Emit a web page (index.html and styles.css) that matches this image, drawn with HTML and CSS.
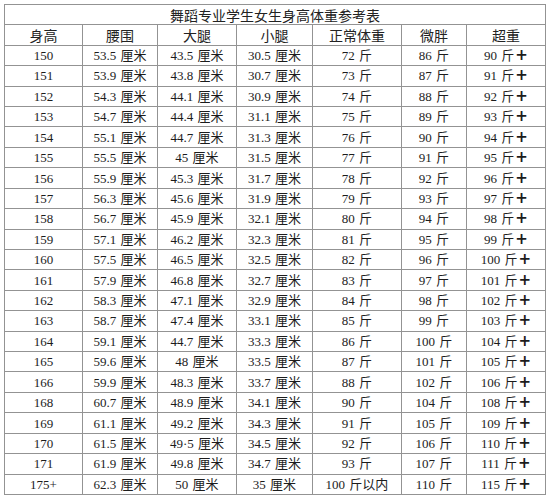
FILE: index.html
```html
<!DOCTYPE html>
<html lang="zh-CN">
<head>
<meta charset="utf-8">
<title>舞蹈专业学生女生身高体重参考表</title>
<link rel="stylesheet" href="styles.css">
</head>
<body>
<div class="sheet">
  <div class="cell title">舞蹈专业学生女生身高体重参考表</div>
  <div class="cell head">身高</div><div class="cell head">腰围</div><div class="cell head">大腿</div><div class="cell head">小腿</div><div class="cell head">正常体重</div><div class="cell head">微胖</div><div class="cell head">超重</div>

  <div class="cell">150</div><div class="cell">53.5 厘米</div><div class="cell">43.5 厘米</div><div class="cell">30.5 厘米</div><div class="cell">72 斤</div><div class="cell">86 斤</div><div class="cell">90 斤<span class="plus">+</span></div>
  <div class="cell">151</div><div class="cell">53.9 厘米</div><div class="cell">43.8 厘米</div><div class="cell">30.7 厘米</div><div class="cell">73 斤</div><div class="cell">87 斤</div><div class="cell">91 斤<span class="plus">+</span></div>
  <div class="cell">152</div><div class="cell">54.3 厘米</div><div class="cell">44.1 厘米</div><div class="cell">30.9 厘米</div><div class="cell">74 斤</div><div class="cell">88 斤</div><div class="cell">92 斤<span class="plus">+</span></div>
  <div class="cell">153</div><div class="cell">54.7 厘米</div><div class="cell">44.4 厘米</div><div class="cell">31.1 厘米</div><div class="cell">75 斤</div><div class="cell">89 斤</div><div class="cell">93 斤<span class="plus">+</span></div>
  <div class="cell">154</div><div class="cell">55.1 厘米</div><div class="cell">44.7 厘米</div><div class="cell">31.3 厘米</div><div class="cell">76 斤</div><div class="cell">90 斤</div><div class="cell">94 斤<span class="plus">+</span></div>
  <div class="cell">155</div><div class="cell">55.5 厘米</div><div class="cell">45 厘米</div><div class="cell">31.5 厘米</div><div class="cell">77 斤</div><div class="cell">91 斤</div><div class="cell">95 斤<span class="plus">+</span></div>
  <div class="cell">156</div><div class="cell">55.9 厘米</div><div class="cell">45.3 厘米</div><div class="cell">31.7 厘米</div><div class="cell">78 斤</div><div class="cell">92 斤</div><div class="cell">96 斤<span class="plus">+</span></div>
  <div class="cell">157</div><div class="cell">56.3 厘米</div><div class="cell">45.6 厘米</div><div class="cell">31.9 厘米</div><div class="cell">79 斤</div><div class="cell">93 斤</div><div class="cell">97 斤<span class="plus">+</span></div>
  <div class="cell">158</div><div class="cell">56.7 厘米</div><div class="cell">45.9 厘米</div><div class="cell">32.1 厘米</div><div class="cell">80 斤</div><div class="cell">94 斤</div><div class="cell">98 斤<span class="plus">+</span></div>
  <div class="cell">159</div><div class="cell">57.1 厘米</div><div class="cell">46.2 厘米</div><div class="cell">32.3 厘米</div><div class="cell">81 斤</div><div class="cell">95 斤</div><div class="cell">99 斤<span class="plus">+</span></div>
  <div class="cell">160</div><div class="cell">57.5 厘米</div><div class="cell">46.5 厘米</div><div class="cell">32.5 厘米</div><div class="cell">82 斤</div><div class="cell">96 斤</div><div class="cell">100 斤<span class="plus">+</span></div>
  <div class="cell">161</div><div class="cell">57.9 厘米</div><div class="cell">46.8 厘米</div><div class="cell">32.7 厘米</div><div class="cell">83 斤</div><div class="cell">97 斤</div><div class="cell">101 斤<span class="plus">+</span></div>
  <div class="cell">162</div><div class="cell">58.3 厘米</div><div class="cell">47.1 厘米</div><div class="cell">32.9 厘米</div><div class="cell">84 斤</div><div class="cell">98 斤</div><div class="cell">102 斤<span class="plus">+</span></div>
  <div class="cell">163</div><div class="cell">58.7 厘米</div><div class="cell">47.4 厘米</div><div class="cell">33.1 厘米</div><div class="cell">85 斤</div><div class="cell">99 斤</div><div class="cell">103 斤<span class="plus">+</span></div>
  <div class="cell">164</div><div class="cell">59.1 厘米</div><div class="cell">44.7 厘米</div><div class="cell">33.3 厘米</div><div class="cell">86 斤</div><div class="cell">100 斤</div><div class="cell">104 斤<span class="plus">+</span></div>
  <div class="cell">165</div><div class="cell">59.6 厘米</div><div class="cell">48 厘米</div><div class="cell">33.5 厘米</div><div class="cell">87 斤</div><div class="cell">101 斤</div><div class="cell">105 斤<span class="plus">+</span></div>
  <div class="cell">166</div><div class="cell">59.9 厘米</div><div class="cell">48.3 厘米</div><div class="cell">33.7 厘米</div><div class="cell">88 斤</div><div class="cell">102 斤</div><div class="cell">106 斤<span class="plus">+</span></div>
  <div class="cell">168</div><div class="cell">60.7 厘米</div><div class="cell">48.9 厘米</div><div class="cell">34.1 厘米</div><div class="cell">90 斤</div><div class="cell">104 斤</div><div class="cell">108 斤<span class="plus">+</span></div>
  <div class="cell">169</div><div class="cell">61.1 厘米</div><div class="cell">49.2 厘米</div><div class="cell">34.3 厘米</div><div class="cell">91 斤</div><div class="cell">105 斤</div><div class="cell">109 斤<span class="plus">+</span></div>
  <div class="cell">170</div><div class="cell">61.5 厘米</div><div class="cell">49·5 厘米</div><div class="cell">34.5 厘米</div><div class="cell">92 斤</div><div class="cell">106 斤</div><div class="cell">110 斤<span class="plus">+</span></div>
  <div class="cell">171</div><div class="cell">61.9 厘米</div><div class="cell">49.8 厘米</div><div class="cell">34.7 厘米</div><div class="cell">93 斤</div><div class="cell">107 斤</div><div class="cell">111 斤<span class="plus">+</span></div>
  <div class="cell">175+</div><div class="cell">62.3 厘米</div><div class="cell">50 厘米</div><div class="cell">35 厘米</div><div class="cell">100 斤以内</div><div class="cell">110 斤</div><div class="cell">115 斤<span class="plus">+</span></div>
</div>
</body>
</html>
```

FILE: styles.css
```css
html, body {
  margin: 0;
  padding: 0;
  background: #ffffff;
}

body {
  padding: 4px 0 0 4px;
}

.sheet {
  box-sizing: border-box;
  width: 542px;
  height: 491px;
  display: grid;
  grid-template-columns: 77px 74px 78px 75px 88px 64px 78px;
  grid-template-rows: repeat(24, 1fr);
  gap: 1px;
  padding: 1px;
  background: #939393;
}

.cell {
  background: #ffffff;
  display: flex;
  align-items: center;
  justify-content: center;
  font-family: "Liberation Serif", "Noto Sans CJK SC", serif;
  font-size: 13px;
  color: #1c1c1c;
  line-height: 1;
  white-space: pre;
  word-spacing: 1px;
}

.title {
  grid-column: 1 / -1;
  font-family: "Noto Sans CJK SC", sans-serif;
  font-size: 14px;
  color: #222222;
}

.head {
  font-family: "Noto Sans CJK SC", sans-serif;
  font-size: 14px;
  color: #222222;
}

.plus {
  font-family: "DejaVu Sans", sans-serif;
  font-weight: bold;
  font-size: 15px;
  margin-left: 1px;
}
```
